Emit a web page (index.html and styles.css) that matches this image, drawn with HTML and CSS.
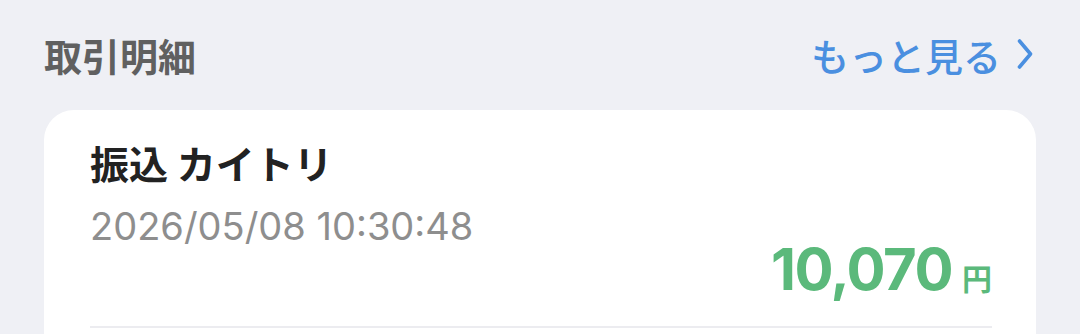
FILE: index.html
```html
<!DOCTYPE html>
<html lang="ja">
<head>
    <meta charset="UTF-8">
    <meta name="viewport" content="width=device-width, initial-scale=1.0">
    <title>取引明細</title>
    <link rel="stylesheet" href="styles.css">
</head>
<body>

<div class="page">
    <div class="section-head">
        <h2 class="section-title">取引明細</h2>
        <a class="more" href="#">
            もっと見る
            <svg class="chevron" width="16" height="32" viewBox="0 0 16 32">
                <path d="M2.5 3 L13.5 16 L2.5 29" fill="none" stroke="currentColor" stroke-width="3.6" stroke-linecap="round" stroke-linejoin="round"/>
            </svg>
        </a>
    </div>

    <div class="card">
        <div class="tx">
            <div class="tx-title">振込 カイトリ</div>
            <div class="tx-date">2026/05/08 10:30:48</div>
            <div class="tx-amount">10,070<span class="yen">円</span></div>
        </div>
        <div class="divider"></div>
    </div>
</div>

</body>
</html>
```

FILE: styles.css
```css
body {
    margin: 0;
    background: rgb(239, 240, 245);
    font-family: "Noto Sans CJK JP", "Noto Sans", sans-serif;
}
.page {
    padding: 22px 44px 0;
}
.section-head {
    display: flex;
    justify-content: space-between;
    align-items: center;
    height: 64px;
}
.section-title {
    margin: 0;
    font-size: 38px;
    font-weight: 700;
    color: rgb(96, 96, 96);
}
.more {
    display: flex;
    align-items: center;
    gap: 16px;
    font-size: 38px;
    font-weight: 500;
    color: rgb(74, 143, 224);
    text-decoration: none;
}
.chevron {
    display: block;
    margin-right: 3px;
}
.card {
    margin-top: 24px;
    background: white;
    border-radius: 30px;
    padding: 28px 44px 40px 46px;
}
.tx-title {
    font-size: 39px;
    font-weight: 700;
    color: rgb(34, 34, 34);
    line-height: 48px;
}
.tx-date {
    margin-top: 18px;
    font-family: Inter, "Noto Sans", sans-serif;
    font-size: 38px;
    color: rgb(142, 142, 142);
    line-height: 44px;
}
.tx-amount {
    text-align: right;
    font-family: Inter, "Noto Sans", sans-serif;
    font-size: 58px;
    font-weight: 700;
    color: rgb(91, 185, 123);
    line-height: 42px;
    letter-spacing: -1.5px;
}
.yen {
    margin-left: 10px;
    font-family: "Noto Sans CJK JP", sans-serif;
    font-size: 30px;
    font-weight: 700;
    letter-spacing: 0;
}
.divider {
    margin-top: 28px;
    border-top: 2px solid rgb(236, 236, 240);
}
```
